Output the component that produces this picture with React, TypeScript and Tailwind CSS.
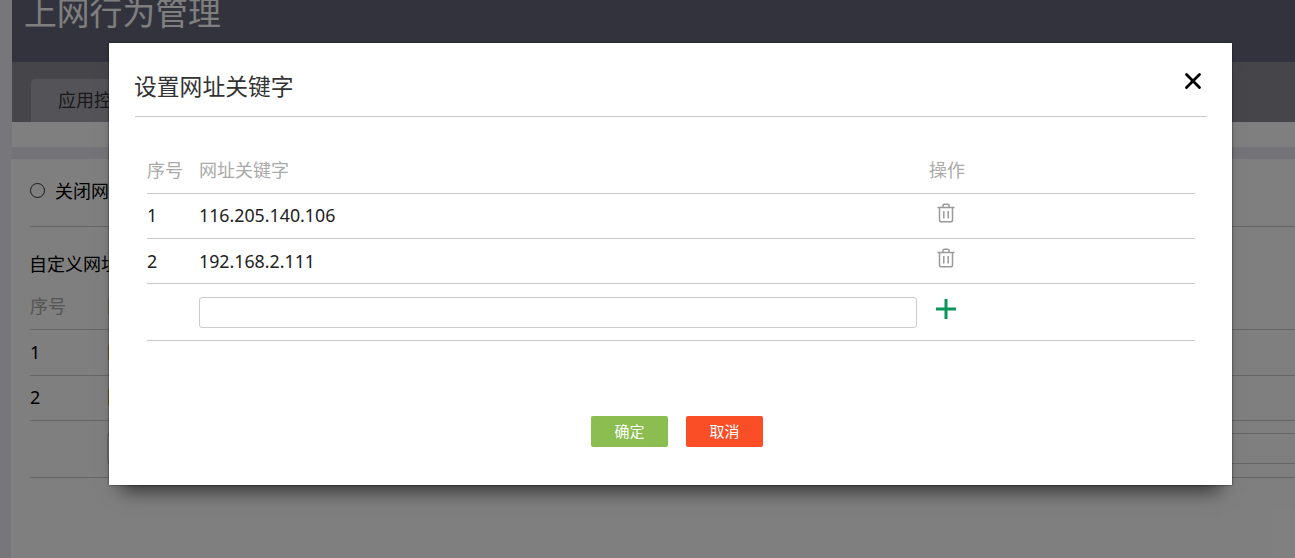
import { X } from "lucide-react"

const font = "font-['Noto_Sans','Noto_Sans_CJK_SC',sans-serif]"

const rows = [
    { id: 1, value: "116.205.140.106", nudge: "mb-[1px]" },
    { id: 2, value: "192.168.2.111", nudge: "" },
]

const TrashIcon = () => (
    <svg width="18" height="20" viewBox="0 0 18 20" fill="none" stroke="#9a9a9a" strokeWidth="1.5">
        <path d="M0.5 4.5h17" />
        <path d="M6 4.5V2.5a1.2 1.2 0 0 1 1.2-1.2h3.6A1.2 1.2 0 0 1 12 2.5v2" />
        <path d="M2.5 4.5v12.8a1.5 1.5 0 0 0 1.5 1.5h10a1.5 1.5 0 0 0 1.5-1.5V4.5" />
        <path d="M6.8 8v7.5M11.2 8v7.5" />
    </svg>
)

const App = () => {
    return (
        <div className={`relative h-[558px] w-[1295px] overflow-hidden bg-[#eeeef6] text-[18px] text-black ${font}`}>
            {/* page behind the dialog */}
            <div className="ml-[12px] flex h-full flex-col">
                <div className="h-[62px] bg-[#66667a] pl-[12px] text-[32.8px] leading-[25px] text-white">上网行为管理</div>
                <div className="flex h-[60px] items-end bg-[#8c8a92] pl-[19px]">
                    <div className="h-[43px] w-[120px] rounded-t-[4px] bg-[#a9a8b0] pl-[27px] pt-[9px] text-[18px] leading-[24px] text-[#333]">应用控制</div>
                </div>
                <div className="h-[25px] bg-white" />
                <div className="h-[12px] bg-[#e6e6f0]" />
                <div className="-ml-[1px] flex-1 bg-white pl-[19px]">
                    <div className="flex h-[68px] items-center gap-[10px] border-b border-[#ccc] pb-[4px]">
                        <span className="size-[15px] rounded-full border border-[#333]" />
                        <span className="leading-[22px]">关闭网址过滤</span>
                    </div>
                    <div className="-ml-[1px] pt-[25px] leading-[24px]">自定义网址</div>
                    <div className="grid h-[54px] grid-cols-[77px_1fr] items-end border-b border-[#ccc] pb-[11px] leading-[24px] text-[#aaa]">
                        <span>序号</span>
                        <span>网址</span>
                    </div>
                    <div className="grid h-[46px] grid-cols-[77px_1fr] items-center border-b border-[#ccc] pb-[1px]">
                        <span>1</span>
                        <span className="text-[#c06000]">网址</span>
                    </div>
                    <div className="grid h-[45px] grid-cols-[77px_1fr] items-center border-b border-[#ccc] pb-[1px]">
                        <span>2</span>
                        <span className="text-[#c06000]">网址</span>
                    </div>
                    <div className="h-[57px] border-b border-[#ccc] pl-[77px] pt-[12px]">
                        <div className="h-[31px] rounded-l-[3px] border-y border-l border-[#ccc]" />
                    </div>
                </div>
            </div>

            {/* overlay + dialog */}
            <div className="absolute inset-0 bg-black/50" />
            <div className="absolute left-[109px] top-[43px] h-[442px] w-[1123px] bg-white pl-[26px] pr-[25px] shadow-[0_0_2px_rgba(0,0,0,0.7),0_18px_18px_-12px_rgba(0,0,0,0.6)]">
                <div className="flex h-[74px] items-end justify-between border-b border-[#c8c8c8] pb-[14px] text-[22.8px] leading-[30px] text-[#333]">
                    <span className="-ml-[1px]">设置网址关键字</span>
                    <X size={26} strokeWidth={2.6} color="#000" className="mb-[8px] mr-[1px]" />
                </div>
                <div className="mx-[12px] mt-[32px]">
                    <div className="grid h-[45px] grid-cols-[52px_730px_1fr] items-center border-b border-[#c8c8c8] pb-[1px] text-[#aaa]">
                        <span>序号</span>
                        <span>网址关键字</span>
                        <span>操作</span>
                    </div>
                    {rows.map(row => (
                        <div key={row.id} className="grid h-[45px] grid-cols-[52px_730px_1fr] items-center border-b border-[#c8c8c8] text-[17.8px] text-[#222]">
                            <span className={row.nudge}>{row.id}</span>
                            <span className={row.nudge}>{row.value}</span>
                            <span className="mb-[7px] pl-[8px]"><TrashIcon /></span>
                        </div>
                    ))}
                    <div className="grid h-[57px] grid-cols-[52px_730px_1fr] items-center border-b border-[#c8c8c8]">
                        <span />
                        <input type="text" className="h-[31px] w-[718px] rounded-[3px] border border-[#ccc] bg-white" />
                        <svg width="20" height="20" viewBox="0 0 20 20" className="mb-[6px] ml-[7px]">
                            <path d="M10 0v20M0 10h20" stroke="#08965a" strokeWidth="3" />
                        </svg>
                    </div>
                </div>
                <div className="mt-[75px] flex justify-center gap-[18px] pl-[12px]">
                    <button type="button" className="h-[31px] w-[77px] rounded-[2px] bg-[#8bbd50] text-[15px] text-white">确定</button>
                    <button type="button" className="h-[31px] w-[77px] rounded-[2px] bg-[#f94e26] text-[15px] text-white">取消</button>
                </div>
            </div>
        </div>
    )
}

export default App
